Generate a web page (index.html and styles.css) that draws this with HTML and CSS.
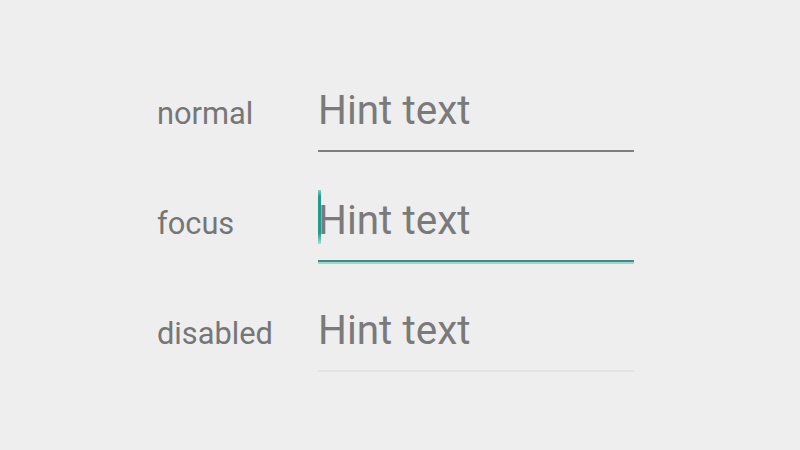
FILE: index.html
```html
<!DOCTYPE html>
<html lang="en">
<head>
  <meta charset="UTF-8">
  <meta name="viewport" content="width=device-width, initial-scale=1.0">
  <title>EditText states</title>
  <link rel="stylesheet" href="styles.css">
</head>
<body>
  <div class="states">
    <div class="row">
      <span class="label">normal</span>
      <div class="field">Hint text</div>
    </div>
    <div class="row">
      <span class="label">focus</span>
      <div class="field focused">
        <span class="cursor"></span>
        Hint text
      </div>
    </div>
    <div class="row">
      <span class="label">disabled</span>
      <div class="field disabled">Hint text</div>
    </div>
  </div>
</body>
</html>
```

FILE: styles.css
```css
body {
  margin: 0;
  background-color: #eeeeee;
  font-family: Roboto, "Noto Sans", sans-serif;
}
.states {
  padding: 86px 0 0 157px;
  display: flex;
  flex-direction: column;
  gap: 44px;
}
.row {
  display: flex;
  align-items: baseline;
}
.label {
  width: 161px;
  font-size: 30.8px;
  color: #767676;
}
.field {
  position: relative;
  width: 316px;
  font-size: 40.5px;
  line-height: 48px;
  padding-bottom: 16px;
  color: #7a7a7a;
  border-bottom: 2px solid #7e7e7e;
  box-sizing: content-box;
}
.field.focused {
  border-bottom-color: #3a8e85;
  box-shadow: 0 2px 0 #a3d4ce;
}
.field.disabled {
  border-bottom-color: #e3e3e3;
}
.cursor {
  position: absolute;
  left: 0;
  top: -6px;
  width: 3px;
  height: 54px;
  background: linear-gradient(#7fcfc5, #1f9c8e 12%, #1f9c8e 80%, #a9dcd5);
}
```
